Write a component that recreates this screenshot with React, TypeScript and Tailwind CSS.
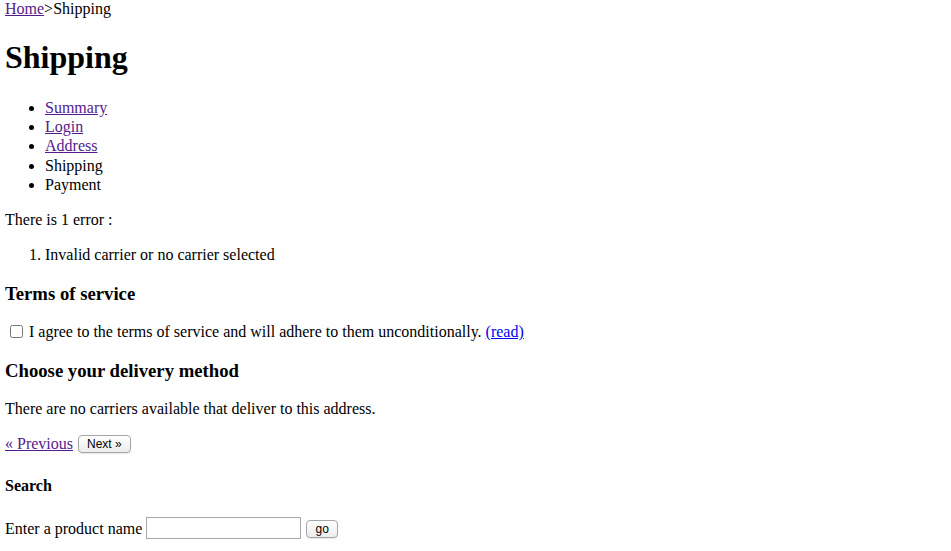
export default function App() {
  const visited = 'text-[#551A8B] underline'
  return (
    <div className="min-h-screen bg-white pl-[5px] font-['Liberation_Serif','Times_New_Roman',serif] text-[16px] leading-[19px] text-black">
      <div className="-mt-[1px]">
        <a href="#" className={visited}>Home</a>
        <span>&gt;</span>Shipping
      </div>
      <h1 className="mt-[21px] mb-[22px] text-[32px] font-bold leading-[37px]">Shipping</h1>
      <ul className="list-disc pl-[40px]">
        <li><a href="#" className={visited}>Summary</a></li>
        <li><a href="#" className={visited}>Login</a></li>
        <li><a href="#" className={visited}>Address</a></li>
        <li className="pt-[1px]">Shipping</li>
        <li>Payment</li>
      </ul>
      <p className="mt-[16px]">There is 1 error :</p>
      <ol className="mt-[16px] list-decimal pl-[40px]">
        <li>Invalid carrier or no carrier selected</li>
      </ol>
      <h3 className="mt-[19px] text-[18.72px] font-bold leading-[21px]">Terms of service</h3>
      <p className="mt-[18px] flex items-center">
        <input type="checkbox" className="ml-[5px] mr-[6px] h-[13px] w-[13px]" />
        <span>
          I agree to the terms of service and will adhere to them unconditionally.{' '}
          <a href="#" className="text-[#0000EE] underline">(read)</a>
        </span>
      </p>
      <h3 className="mt-[19px] text-[18.72px] font-bold leading-[21px]">Choose your delivery method</h3>
      <p className="mt-[18px]">There are no carriers available that deliver to this address.</p>
      <p className="mt-[16px] flex items-center gap-[5px]">
        <a href="#" className={visited}>« Previous</a>
        <button className="h-[18px] rounded-[4px] border border-[#a6a6a6] bg-gradient-to-b from-white to-[#ececec] px-[8px] font-['Liberation_Sans',Arial,sans-serif] text-[12px] leading-[16px] shadow-[0_1px_1px_rgba(0,0,0,0.1)]">
          Next »
        </button>
      </p>
      <h4 className="mt-[23px] font-bold">Search</h4>
      <p className="mt-[22px] flex items-center">
        <span>Enter a product name</span>
        <input type="text" className="ml-[4px] h-[22px] w-[155px] border border-[#a9a9a9] bg-white" />
        <button className="ml-[5px] mt-[2px] h-[18px] w-[32px] rounded-[4px] border border-[#a6a6a6] bg-gradient-to-b from-white to-[#ececec] font-['Liberation_Sans',Arial,sans-serif] text-[12px] leading-[16px] shadow-[0_1px_1px_rgba(0,0,0,0.1)]">
          go
        </button>
      </p>
    </div>
  )
}
